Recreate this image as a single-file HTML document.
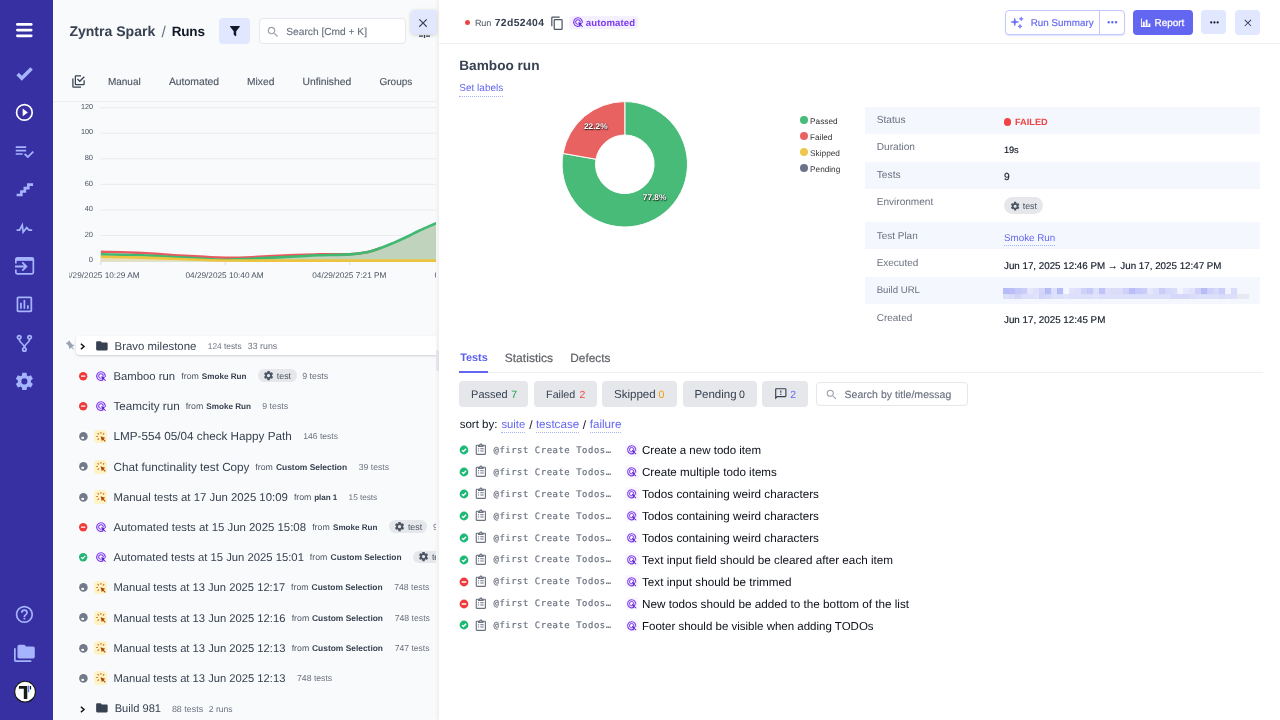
<!DOCTYPE html>
<html lang="en">
<head>
<meta charset="utf-8">
<title>Zyntra Spark / Runs</title>
<style>
*{box-sizing:border-box;margin:0;padding:0}
html,body{width:1280px;height:720px;overflow:hidden;background:#fff}
body{text-rendering:geometricPrecision;font-family:"Liberation Sans",sans-serif;color:#374151;position:relative;font-size:11.2px}
.abs,.t{position:absolute}
.t{white-space:pre;line-height:20px;height:20px;}
svg{position:absolute;display:block;overflow:visible}
#side{position:absolute;left:0;top:0;width:52.5px;height:720px;background:#3730a3}
#side svg{fill:#a5b4fc}
#side svg.w{fill:#fff}
#left{position:absolute;left:52.5px;top:0;width:386.7px;height:720px;background:#f9fafb;overflow:hidden}
#right{position:absolute;left:439.2px;top:0;width:840.8px;height:720px;background:#fff;box-shadow:-1px 0 4px rgba(0,0,0,.07)}
#app{position:absolute;left:0;top:0;width:1280px;height:720px;overflow:hidden;will-change:transform;background:#fff}

</style>
</head>
<body>
<div id="app">
<nav id="side">
<svg class="w" style="left:16.2px;top:22.6px" width="16.6" height="14.2" viewBox="0 0 16.6 14.2"><rect x="0" y="0" width="16.6" height="2.8" rx="1.4"/><rect x="0" y="5.7" width="16.6" height="2.8" rx="1.4"/><rect x="0" y="11.4" width="16.6" height="2.8" rx="1.4"/></svg>
<svg style="left:14.0px;top:62.6px" width="20.8" height="20.8" viewBox="0 0 24 24"><path d="M9,20.42L2.79,14.21L5.62,11.38L9,14.77L18.88,4.88L21.71,7.71L9,20.42Z"/></svg>
<svg class="w" style="left:14.0px;top:101.6px" width="20.8" height="20.8" viewBox="0 0 24 24"><path d="M12,20C7.59,20 4,16.41 4,12C4,7.59 7.59,4 12,4C16.41,4 20,7.59 20,12C20,16.41 16.41,20 12,20M12,2A10,10 0 0,0 2,12A10,10 0 0,0 12,22A10,10 0 0,0 22,12A10,10 0 0,0 12,2M10,16.5L16,12L10,7.5V16.5Z"/></svg>
<svg style="left:14.0px;top:140.6px" width="20.8" height="20.8" viewBox="0 0 24 24"><path d="M14,10H2V12H14V10M14,6H2V8H14V6M2,16H10V14H2V16M21.5,11.5L23,13L16,20L11.5,15.5L13,14L16,17L21.5,11.5Z"/></svg>
<svg style="left:14.0px;top:178.6px" width="20.8" height="20.8" viewBox="0 0 24 24"><path d="M15,5V9H11V13H7V17H3V20H10V16H14V12H18V8H22V5H15Z"/></svg>
<svg style="left:14.0px;top:217.6px" width="20.8" height="20.8" viewBox="0 0 24 24"><path d="M3,13H5.79L10.1,4.79L11.28,13.75L14.5,9.66L17.83,13H21V15H17L14.67,12.67L9.92,18.73L8.94,11.31L7,15H3V13Z"/></svg>
<svg style="left:14.6px;top:257.3px" width="19.2" height="17.7" viewBox="0 0 19.2 17.7"><path d="M0.85 6.6V2.4a1.5 1.5 0 0 1 1.5-1.5H16.85a1.5 1.5 0 0 1 1.5 1.5V15.3a1.5 1.5 0 0 1-1.5 1.5H2.35a1.5 1.5 0 0 1-1.5-1.5V12.4" fill="none" stroke="#a5b4fc" stroke-width="1.7"/><rect x="0.85" y="0.85" width="17.5" height="3" /><path d="M0 9.5H10.8M7.3 5.4L11.4 9.5L7.3 13.6" fill="none" stroke="#a5b4fc" stroke-width="1.8"/></svg>
<svg style="left:14.0px;top:293.6px" width="20.8" height="20.8" viewBox="0 0 24 24"><path d="M9 17H7V10H9V17M13 17H11V7H13V17M17 17H15V13H17V17M19 19H5V5H19V19.1M19 3H5C3.9 3 3 3.9 3 5V19C3 20.1 3.9 21 5 21H19C20.1 21 21 20.1 21 19V5C21 3.9 20.1 3 19 3Z"/></svg>
<svg style="left:14.0px;top:332.6px" width="20.8" height="20.8" viewBox="0 0 24 24"><path d="M6,2A3,3 0 0,1 9,5C9,6.28 8.19,7.38 7.06,7.81C7.15,8.27 7.39,8.83 8,9.63C9,10.92 11,12.83 12,14.17C13,12.83 15,10.92 16,9.63C16.61,8.83 16.85,8.27 16.94,7.81C15.81,7.38 15,6.28 15,5A3,3 0 0,1 18,2A3,3 0 0,1 21,5C21,6.32 20.14,7.45 18.95,7.85C18.87,8.37 18.64,9 18,9.83C17,11.17 15,13.08 14,14.38C13.39,15.17 13.15,15.73 13.06,16.19C14.19,16.62 15,17.72 15,19A3,3 0 0,1 12,22A3,3 0 0,1 9,19C9,17.72 9.81,16.62 10.94,16.19C10.85,15.73 10.61,15.17 10,14.38C9,13.08 7,11.17 6,9.83C5.36,9 5.13,8.37 5.05,7.85C3.86,7.45 3,6.32 3,5A3,3 0 0,1 6,2M6,4A1,1 0 0,0 5,5A1,1 0 0,0 6,6A1,1 0 0,0 7,5A1,1 0 0,0 6,4M18,4A1,1 0 0,0 17,5A1,1 0 0,0 18,6A1,1 0 0,0 19,5A1,1 0 0,0 18,4M12,18A1,1 0 0,0 11,19A1,1 0 0,0 12,20A1,1 0 0,0 13,19A1,1 0 0,0 12,18Z"/></svg>
<svg style="left:14.0px;top:370.6px" width="20.8" height="20.8" viewBox="0 0 24 24"><path d="M12,15.5A3.5,3.5 0 0,1 8.5,12A3.5,3.5 0 0,1 12,8.5A3.5,3.5 0 0,1 15.5,12A3.5,3.5 0 0,1 12,15.5M19.43,12.97C19.47,12.65 19.5,12.33 19.5,12C19.5,11.67 19.47,11.34 19.43,11L21.54,9.37C21.73,9.22 21.78,8.95 21.66,8.73L19.66,5.27C19.54,5.05 19.27,4.96 19.05,5.05L16.56,6.05C16.04,5.66 15.5,5.32 14.87,5.07L14.5,2.42C14.46,2.18 14.25,2 14,2H10C9.75,2 9.54,2.18 9.5,2.42L9.13,5.07C8.5,5.32 7.96,5.66 7.44,6.05L4.95,5.05C4.73,4.96 4.46,5.05 4.34,5.27L2.34,8.73C2.21,8.95 2.27,9.22 2.46,9.37L4.57,11C4.53,11.34 4.5,11.67 4.5,12C4.5,12.33 4.53,12.65 4.57,12.97L2.46,14.63C2.27,14.78 2.21,15.05 2.34,15.27L4.34,18.73C4.46,18.95 4.73,19.03 4.95,18.95L7.44,17.94C7.96,18.34 8.5,18.68 9.13,18.93L9.5,21.58C9.54,21.82 9.75,22 10,22H14C14.25,22 14.46,21.82 14.5,21.58L14.87,18.93C15.5,18.67 16.04,18.34 16.56,17.94L19.05,18.95C19.27,19.03 19.54,18.95 19.66,18.73L21.66,15.27C21.78,15.05 21.73,14.78 21.54,14.63L19.43,12.97Z"/></svg>
<svg style="left:14.0px;top:603.6px" width="20.8" height="20.8" viewBox="0 0 24 24"><path d="M11,18H13V16H11V18M12,2A10,10 0 0,0 2,12A10,10 0 0,0 12,22A10,10 0 0,0 22,12A10,10 0 0,0 12,2M12,20C7.59,20 4,16.41 4,12C4,7.59 7.59,4 12,4C16.41,4 20,7.59 20,12C20,16.41 16.41,20 12,20M12,6A4,4 0 0,0 8,10H10A2,2 0 0,1 12,8A2,2 0 0,1 14,10C14,12 11,11.75 11,15H13C13,12.75 16,12.5 16,10A4,4 0 0,0 12,6Z"/></svg>
<svg style="left:14.0px;top:642.6px" width="20.8" height="20.8" viewBox="0 0 24 24"><path d="M22,4H14L12,2H6A2,2 0 0,0 4,4V16A2,2 0 0,0 6,18H22A2,2 0 0,0 24,16V6A2,2 0 0,0 22,4M2,6H0V11H0V20A2,2 0 0,0 2,22H20V20H2V6Z"/></svg>
<svg style="left:0;top:0" width="52" height="720" viewBox="0 0 52 720"><circle cx="25.05" cy="691.65" r="10.4" fill="#fff" stroke="#1a1a1a" stroke-width="1.1"/><path d="M18.9 686H27.3V698.9H23.8V688.8H18.9Z" fill="#1a1a1a"/><rect x="27.9" y="685.6" width="1.3" height="6.6" fill="#4f7df5"/><rect x="29.9" y="686" width="1.2" height="3.5" fill="#1a1a1a"/></svg>
</nav>
<section id="left">
<span class="t" style="left:16.9px;top:21px;font-size:14.06px;font-weight:700;color:#374151">Zyntra Spark</span>
<span class="t" style="left:108.9px;top:23px;font-size:15.41px;letter-spacing:0.520px;color:#6b7280">/</span>
<span class="t" style="left:119.2px;top:22px;font-size:13.54px;letter-spacing:-0.175px;font-weight:700;color:#111827">Runs</span>
<div class="abs" style="left:166.5px;top:18.1px;width:30.8px;height:25.9px;background:#e0e7ff;border-radius:4px"></div>
<svg style="left:177.0px;top:26.4px" width="9.9" height="10.2" viewBox="0 0 9.9 10.2" fill="#111827"><path d="M0.5 0H9.4a.5.5 0 0 1 .4.8L6.2 5.2V9.7a.5.5 0 0 1-.8.4L4 9a.8.8 0 0 1-.3-.6V5.2L.1.8A.5.5 0 0 1 .5 0Z"/></svg>
<div class="abs" style="left:206.0px;top:18px;width:147.1px;height:26px;background:#fff;border:1px solid #e5e7eb;border-radius:4px"></div>
<svg style="left:213.8px;top:24.7px" width="14.0" height="14.0" viewBox="0 0 24 24" fill="#9ca3af"><path d="M9.5,3A6.5,6.5 0 0,1 16,9.5C16,11.11 15.41,12.59 14.44,13.73L14.71,14H15.5L20.5,19L19,20.5L14,15.5V14.71L13.73,14.44C12.59,15.41 11.11,16 9.5,16A6.5,6.5 0 0,1 3,9.5A6.5,6.5 0 0,1 9.5,3M9.5,5C7,5 5,7 5,9.5C5,12 7,14 9.5,14C12,14 14,12 14,9.5C14,7 12,5 9.5,5Z"/></svg>
<span class="t" style="left:233.8px;top:23px;font-size:10.20px;color:#6b7280;-webkit-text-stroke:.15px #6b7280">Search [Cmd + K]</span>
<svg style="left:365.0px;top:27px" width="13" height="12" viewBox="0 0 13 12" fill="none" stroke="#374151" stroke-width="1.3"><path d="M1 5H12M1 9.2H5M8 9.2H12M6.5 8V11"/></svg>
<svg style="left:18.5px;top:74.3px" width="15.0" height="15.0" viewBox="0 0 24 24" fill="#374151"><path d="M20,16V10H22V16A2,2 0 0,1 20,18H8C6.89,18 6,17.1 6,16V4C6,2.89 6.89,2 8,2H16V4H8V16H20M10.91,7.08L14,10.17L20.59,3.58L22,5L14,13L9.5,8.5L10.91,7.08M16,20V22H4A2,2 0 0,1 2,20V7H4V20H16Z"/></svg>
<span class="t" style="left:55.4px;top:73px;font-size:10.02px;color:#4b5563;-webkit-text-stroke:.12px #4b5563">Manual</span>
<span class="t" style="left:116.4px;top:73px;font-size:10.40px;color:#4b5563;-webkit-text-stroke:.12px #4b5563">Automated</span>
<span class="t" style="left:194.5px;top:73px;font-size:10.27px;color:#4b5563;-webkit-text-stroke:.12px #4b5563">Mixed</span>
<span class="t" style="left:250.0px;top:73px;font-size:10.32px;color:#4b5563;-webkit-text-stroke:.12px #4b5563">Unfinished</span>
<span class="t" style="left:327.0px;top:73px;font-size:10.00px;color:#4b5563;-webkit-text-stroke:.12px #4b5563">Groups</span>
<div class="abs" style="left:0;top:100.8px;width:383.5px;height:1px;background:#eceef1"></div>
<svg style="left:0;top:0;overflow:hidden" width="383.5" height="300" viewBox="52.5 0 383.5 300"><path d="M100 107.70H436" stroke="#e9ebee" stroke-width="1" fill="none"/><path d="M100 133.25H436" stroke="#e9ebee" stroke-width="1" fill="none"/><path d="M100 158.80H436" stroke="#e9ebee" stroke-width="1" fill="none"/><path d="M100 184.35H436" stroke="#e9ebee" stroke-width="1" fill="none"/><path d="M100 209.90H436" stroke="#e9ebee" stroke-width="1" fill="none"/><path d="M100 235.45H436" stroke="#e9ebee" stroke-width="1" fill="none"/><path d="M100 261.00H436" stroke="#e9ebee" stroke-width="1" fill="none"/><path d="M100.3 261V265" stroke="#d8dbe0" stroke-width="1" fill="none"/><path d="M224.8 261V265" stroke="#d8dbe0" stroke-width="1" fill="none"/><path d="M349.3 261V265" stroke="#d8dbe0" stroke-width="1" fill="none"/><path d="M100.3 254.40C107.2 254.55 129.8 254.87 141.9 255.30C154.0 255.73 162.7 256.42 173.1 257.00C183.5 257.58 195.8 258.33 204.4 258.80C213.0 259.27 217.0 259.82 224.8 259.80C232.6 259.78 239.6 259.25 251.2 258.70C262.9 258.15 284.0 257.07 295.0 256.50C306.0 255.93 308.4 255.65 317.5 255.30C326.6 254.95 341.0 254.97 349.3 254.40C357.6 253.83 362.4 252.95 367.5 251.90C372.6 250.85 375.8 249.57 380.0 248.10C384.2 246.63 388.3 244.87 392.5 243.10C396.7 241.33 400.8 239.47 405.0 237.50C409.2 235.53 413.3 233.23 417.5 231.25C421.7 229.27 426.9 226.96 430.0 225.60C433.1 224.24 433.3 224.28 436.0 223.10C438.7 221.92 444.3 219.27 446.0 218.50V261.4H100.3Z" fill="#c0d3bd"/><path d="M100.3 256.80C107.2 256.93 129.8 257.27 141.9 257.60C154.0 257.93 162.7 258.40 173.1 258.80C183.5 259.20 195.8 259.72 204.4 260.00C213.0 260.28 217.0 260.40 224.8 260.50C232.6 260.60 232.1 260.58 251.2 260.60C270.4 260.62 309.2 260.60 340.0 260.60C370.8 260.60 418.3 260.60 436.0 260.60C453.7 260.60 444.3 260.60 446.0 260.60V261.6H100.3Z" fill="#e6dfbd"/><path d="M100.3 251.70C107.2 251.92 129.8 252.42 141.9 253.00C154.0 253.58 162.7 254.55 173.1 255.20C183.5 255.85 195.8 256.48 204.4 256.90C213.0 257.32 217.0 257.65 224.8 257.70C232.6 257.75 239.6 257.65 251.2 257.20C262.9 256.75 284.0 255.47 295.0 255.00C306.0 254.53 308.4 254.53 317.5 254.40C326.6 254.27 341.0 254.62 349.3 254.20C357.6 253.78 362.4 252.92 367.5 251.90C372.6 250.88 377.9 248.73 380.0 248.10" fill="none" stroke="#e85a5f" stroke-width="2.6" stroke-linejoin="round"/><path d="M100.3 254.40C107.2 254.55 129.8 254.87 141.9 255.30C154.0 255.73 162.7 256.42 173.1 257.00C183.5 257.58 195.8 258.33 204.4 258.80C213.0 259.27 217.0 259.82 224.8 259.80C232.6 259.78 239.6 259.25 251.2 258.70C262.9 258.15 284.0 257.07 295.0 256.50C306.0 255.93 308.4 255.65 317.5 255.30C326.6 254.95 341.0 254.97 349.3 254.40C357.6 253.83 362.4 252.95 367.5 251.90C372.6 250.85 375.8 249.57 380.0 248.10C384.2 246.63 388.3 244.87 392.5 243.10C396.7 241.33 400.8 239.47 405.0 237.50C409.2 235.53 413.3 233.23 417.5 231.25C421.7 229.27 426.9 226.96 430.0 225.60C433.1 224.24 433.3 224.28 436.0 223.10C438.7 221.92 444.3 219.27 446.0 218.50" fill="none" stroke="#3fb871" stroke-width="2.6" stroke-linejoin="round"/><path d="M100.3 256.80C107.2 256.93 129.8 257.27 141.9 257.60C154.0 257.93 162.7 258.40 173.1 258.80C183.5 259.20 195.8 259.72 204.4 260.00C213.0 260.28 217.0 260.40 224.8 260.50C232.6 260.60 232.1 260.58 251.2 260.60C270.4 260.62 309.2 260.60 340.0 260.60C370.8 260.60 418.3 260.60 436.0 260.60C453.7 260.60 444.3 260.60 446.0 260.60" fill="none" stroke="#ecc440" stroke-width="2.6" stroke-linejoin="round"/></svg>
<span class="t" style="left:28.4px;top:97px;font-size:7.26px;color:#4b5563">120</span>
<span class="t" style="left:28.4px;top:122px;font-size:7.26px;color:#4b5563">100</span>
<span class="t" style="left:32.2px;top:148px;font-size:7.46px;color:#4b5563">80</span>
<span class="t" style="left:32.2px;top:174px;font-size:7.46px;color:#4b5563">60</span>
<span class="t" style="left:32.2px;top:199px;font-size:7.46px;color:#4b5563">40</span>
<span class="t" style="left:32.2px;top:225px;font-size:7.46px;color:#4b5563">20</span>
<span class="t" style="left:36.3px;top:250px;font-size:7.54px;color:#4b5563">0</span>
<div class="abs" style="left:16.8px;top:262px;width:366.7px;height:26px;overflow:hidden">
<span class="t" style="left:-8.2px;top:4px;font-size:8.25px;color:#4b5563">04/29/2025 10:29 AM</span>
<span class="t" style="left:116.2px;top:4px;font-size:8.23px;color:#4b5563">04/29/2025 10:40 AM</span>
<span class="t" style="left:243.0px;top:4px;font-size:8.22px;color:#4b5563">04/29/2025 7:21 PM</span>
<span class="t" style="left:365.2px;top:3px;font-size:8.72px;color:#4b5563">04/30/2025 9:02 AM</span>
</div>
<svg style="left:25.5px;top:370.9px" width="10.4" height="10.4" viewBox="0 0 10.4 10.4"><circle cx="5.2" cy="5.2" r="5.2" fill="#fff"/><circle cx="5.2" cy="5.2" r="4.2" fill="#ef3b3b"/><rect x="3" y="4.55" width="4.4" height="1.3" rx=".3" fill="#fff"/></svg>
<div class="abs" style="left:41.4px;top:369.3px;width:13.6px;height:13.6px;background:#faf7ff;border-radius:3px"></div>
<svg style="left:42.2px;top:370.1px" width="12.0" height="12.0" viewBox="-6 -6 12 12" fill="none"><path d="M2.6 3.5A4.3 4.3 0 1 1 4.2 1" stroke="#7c3aed" stroke-width="1.15"/><path d="M.6 2.2A2.3 2.3 0 1 1 2.2 .5" stroke="#7c3aed" stroke-width="1.05"/><path d="M.2 .1L4.1 1.5L2.9 2.3L4.9 4.4L4.3 5L2.2 2.9L1.5 4.1Z" fill="#5b21d6"/></svg>
<span class="t" style="left:61.0px;top:367px;font-size:11.30px;color:#374151">Bamboo run</span>
<span class="t" style="left:128.8px;top:366px;font-size:8.75px;color:#4b5563">from</span>
<span class="t" style="left:149.3px;top:367px;font-size:8.15px;font-weight:700;color:#374151">Smoke Run</span>
<div class="abs" style="left:205.0px;top:369.4px;width:39.1px;height:12.8px;background:#e5e7eb;border-radius:6.4px"></div>
<svg style="left:210.6px;top:370.2px" width="11.1" height="11.1" viewBox="0 0 24 24" fill="#4b5563"><path d="M12,15.5A3.5,3.5 0 0,1 8.5,12A3.5,3.5 0 0,1 12,8.5A3.5,3.5 0 0,1 15.5,12A3.5,3.5 0 0,1 12,15.5M19.43,12.97C19.47,12.65 19.5,12.33 19.5,12C19.5,11.67 19.47,11.34 19.43,11L21.54,9.37C21.73,9.22 21.78,8.95 21.66,8.73L19.66,5.27C19.54,5.05 19.27,4.96 19.05,5.05L16.56,6.05C16.04,5.66 15.5,5.32 14.87,5.07L14.5,2.42C14.46,2.18 14.25,2 14,2H10C9.75,2 9.54,2.18 9.5,2.42L9.13,5.07C8.5,5.32 7.96,5.66 7.44,6.05L4.95,5.05C4.73,4.96 4.46,5.05 4.34,5.27L2.34,8.73C2.21,8.95 2.27,9.22 2.46,9.37L4.57,11C4.53,11.34 4.5,11.67 4.5,12C4.5,12.33 4.53,12.65 4.57,12.97L2.46,14.63C2.27,14.78 2.21,15.05 2.34,15.27L4.34,18.73C4.46,18.95 4.73,19.03 4.95,18.95L7.44,17.94C7.96,18.34 8.5,18.68 9.13,18.93L9.5,21.58C9.54,21.82 9.75,22 10,22H14C14.25,22 14.46,21.82 14.5,21.58L14.87,18.93C15.5,18.67 16.04,18.34 16.56,17.94L19.05,18.95C19.27,19.03 19.54,18.95 19.66,18.73L21.66,15.27C21.78,15.05 21.73,14.78 21.54,14.63L19.43,12.97Z"/></svg>
<span class="t" style="left:224.2px;top:366px;font-size:8.93px;color:#4b5563">test</span>
<span class="t" style="left:249.7px;top:366px;font-size:8.86px;color:#6b7280">9 tests</span>
<svg style="left:25.5px;top:401.1px" width="10.4" height="10.4" viewBox="0 0 10.4 10.4"><circle cx="5.2" cy="5.2" r="5.2" fill="#fff"/><circle cx="5.2" cy="5.2" r="4.2" fill="#ef3b3b"/><rect x="3" y="4.55" width="4.4" height="1.3" rx=".3" fill="#fff"/></svg>
<div class="abs" style="left:41.4px;top:399.5px;width:13.6px;height:13.6px;background:#faf7ff;border-radius:3px"></div>
<svg style="left:42.2px;top:400.3px" width="12.0" height="12.0" viewBox="-6 -6 12 12" fill="none"><path d="M2.6 3.5A4.3 4.3 0 1 1 4.2 1" stroke="#7c3aed" stroke-width="1.15"/><path d="M.6 2.2A2.3 2.3 0 1 1 2.2 .5" stroke="#7c3aed" stroke-width="1.05"/><path d="M.2 .1L4.1 1.5L2.9 2.3L4.9 4.4L4.3 5L2.2 2.9L1.5 4.1Z" fill="#5b21d6"/></svg>
<span class="t" style="left:61.0px;top:397px;font-size:11.70px;color:#374151">Teamcity run</span>
<span class="t" style="left:133.2px;top:396px;font-size:8.75px;color:#4b5563">from</span>
<span class="t" style="left:153.8px;top:397px;font-size:8.13px;font-weight:700;color:#374151">Smoke Run</span>
<span class="t" style="left:209.8px;top:396px;font-size:8.76px;color:#6b7280">9 tests</span>
<svg style="left:25.3px;top:431.1px" width="10.8" height="10.8" viewBox="0 0 10.8 10.8"><circle cx="5.4" cy="5.4" r="5.4" fill="#fff"/><circle cx="5.4" cy="5.4" r="4.3" fill="#737a89"/><ellipse cx="4.7" cy="6.9" rx="1.5" ry="1.15" fill="#fff"/></svg>
<div class="abs" style="left:41.4px;top:429.6px;width:13.6px;height:13.8px;background:#fef3c7;border-radius:3.5px"></div>
<svg style="left:41.4px;top:429.6px" width="13.7" height="13.8" viewBox="0 0 13.7 13.8"><path d="M6.9 1.9V3.7M3.6 3.2L4.9 4.5M10.2 3.2L8.9 4.5M2.2 6.5H4M3.6 9.8L4.9 8.5" stroke="#d07a2a" stroke-width="1.15" fill="none"/><path d="M6.6 6.3L11.2 7.8L9.7 8.9L11.7 10.9L10.9 11.7L8.9 9.7L7.8 11.2Z" fill="#b04a06"/></svg>
<span class="t" style="left:61.0px;top:427px;font-size:11.71px;color:#374151">LMP-554 05/04 check Happy Path</span>
<span class="t" style="left:250.8px;top:426px;font-size:8.55px;color:#6b7280">146 tests</span>
<svg style="left:25.3px;top:461.3px" width="10.8" height="10.8" viewBox="0 0 10.8 10.8"><circle cx="5.4" cy="5.4" r="5.4" fill="#fff"/><circle cx="5.4" cy="5.4" r="4.3" fill="#737a89"/><ellipse cx="4.7" cy="6.9" rx="1.5" ry="1.15" fill="#fff"/></svg>
<div class="abs" style="left:41.4px;top:459.8px;width:13.6px;height:13.8px;background:#fef3c7;border-radius:3.5px"></div>
<svg style="left:41.4px;top:459.8px" width="13.7" height="13.8" viewBox="0 0 13.7 13.8"><path d="M6.9 1.9V3.7M3.6 3.2L4.9 4.5M10.2 3.2L8.9 4.5M2.2 6.5H4M3.6 9.8L4.9 8.5" stroke="#d07a2a" stroke-width="1.15" fill="none"/><path d="M6.6 6.3L11.2 7.8L9.7 8.9L11.7 10.9L10.9 11.7L8.9 9.7L7.8 11.2Z" fill="#b04a06"/></svg>
<span class="t" style="left:61.0px;top:458px;font-size:11.71px;color:#374151">Chat functinality test Copy</span>
<span class="t" style="left:202.8px;top:457px;font-size:8.75px;color:#4b5563">from</span>
<span class="t" style="left:223.4px;top:457px;font-size:8.45px;font-weight:700;color:#374151">Custom Selection</span>
<span class="t" style="left:306.2px;top:457px;font-size:8.70px;color:#6b7280">39 tests</span>
<svg style="left:25.3px;top:491.5px" width="10.8" height="10.8" viewBox="0 0 10.8 10.8"><circle cx="5.4" cy="5.4" r="5.4" fill="#fff"/><circle cx="5.4" cy="5.4" r="4.3" fill="#737a89"/><ellipse cx="4.7" cy="6.9" rx="1.5" ry="1.15" fill="#fff"/></svg>
<div class="abs" style="left:41.4px;top:490.0px;width:13.6px;height:13.8px;background:#fef3c7;border-radius:3.5px"></div>
<svg style="left:41.4px;top:490.0px" width="13.7" height="13.8" viewBox="0 0 13.7 13.8"><path d="M6.9 1.9V3.7M3.6 3.2L4.9 4.5M10.2 3.2L8.9 4.5M2.2 6.5H4M3.6 9.8L4.9 8.5" stroke="#d07a2a" stroke-width="1.15" fill="none"/><path d="M6.6 6.3L11.2 7.8L9.7 8.9L11.7 10.9L10.9 11.7L8.9 9.7L7.8 11.2Z" fill="#b04a06"/></svg>
<span class="t" style="left:61.0px;top:488px;font-size:11.36px;color:#374151">Manual tests at 17 Jun 2025 10:09</span>
<span class="t" style="left:241.4px;top:487px;font-size:8.75px;color:#4b5563">from</span>
<span class="t" style="left:261.7px;top:488px;font-size:8.08px;letter-spacing:-0.071px;font-weight:700;color:#374151">plan 1</span>
<span class="t" style="left:296.1px;top:488px;font-size:8.27px;letter-spacing:-0.052px;color:#6b7280">15 tests</span>
<svg style="left:25.5px;top:521.9px" width="10.4" height="10.4" viewBox="0 0 10.4 10.4"><circle cx="5.2" cy="5.2" r="5.2" fill="#fff"/><circle cx="5.2" cy="5.2" r="4.2" fill="#ef3b3b"/><rect x="3" y="4.55" width="4.4" height="1.3" rx=".3" fill="#fff"/></svg>
<div class="abs" style="left:41.4px;top:520.3px;width:13.6px;height:13.6px;background:#faf7ff;border-radius:3px"></div>
<svg style="left:42.2px;top:521.1px" width="12.0" height="12.0" viewBox="-6 -6 12 12" fill="none"><path d="M2.6 3.5A4.3 4.3 0 1 1 4.2 1" stroke="#7c3aed" stroke-width="1.15"/><path d="M.6 2.2A2.3 2.3 0 1 1 2.2 .5" stroke="#7c3aed" stroke-width="1.05"/><path d="M.2 .1L4.1 1.5L2.9 2.3L4.9 4.4L4.3 5L2.2 2.9L1.5 4.1Z" fill="#5b21d6"/></svg>
<span class="t" style="left:61.0px;top:518px;font-size:11.40px;color:#374151">Automated tests at 15 Jun 2025 15:08</span>
<span class="t" style="left:259.7px;top:517px;font-size:8.75px;color:#4b5563">from</span>
<span class="t" style="left:280.5px;top:518px;font-size:8.09px;font-weight:700;color:#374151">Smoke Run</span>
<div class="abs" style="left:336.2px;top:520.4px;width:38.4px;height:12.8px;background:#e5e7eb;border-radius:6.4px"></div>
<svg style="left:341.9px;top:521.2px" width="11.1" height="11.1" viewBox="0 0 24 24" fill="#4b5563"><path d="M12,15.5A3.5,3.5 0 0,1 8.5,12A3.5,3.5 0 0,1 12,8.5A3.5,3.5 0 0,1 15.5,12A3.5,3.5 0 0,1 12,15.5M19.43,12.97C19.47,12.65 19.5,12.33 19.5,12C19.5,11.67 19.47,11.34 19.43,11L21.54,9.37C21.73,9.22 21.78,8.95 21.66,8.73L19.66,5.27C19.54,5.05 19.27,4.96 19.05,5.05L16.56,6.05C16.04,5.66 15.5,5.32 14.87,5.07L14.5,2.42C14.46,2.18 14.25,2 14,2H10C9.75,2 9.54,2.18 9.5,2.42L9.13,5.07C8.5,5.32 7.96,5.66 7.44,6.05L4.95,5.05C4.73,4.96 4.46,5.05 4.34,5.27L2.34,8.73C2.21,8.95 2.27,9.22 2.46,9.37L4.57,11C4.53,11.34 4.5,11.67 4.5,12C4.5,12.33 4.53,12.65 4.57,12.97L2.46,14.63C2.27,14.78 2.21,15.05 2.34,15.27L4.34,18.73C4.46,18.95 4.73,19.03 4.95,18.95L7.44,17.94C7.96,18.34 8.5,18.68 9.13,18.93L9.5,21.58C9.54,21.82 9.75,22 10,22H14C14.25,22 14.46,21.82 14.5,21.58L14.87,18.93C15.5,18.67 16.04,18.34 16.56,17.94L19.05,18.95C19.27,19.03 19.54,18.95 19.66,18.73L21.66,15.27C21.78,15.05 21.73,14.78 21.54,14.63L19.43,12.97Z"/></svg>
<span class="t" style="left:355.4px;top:517px;font-size:8.93px;color:#4b5563">test</span>
<span class="t" style="left:380.5px;top:517px;font-size:8.86px;color:#6b7280">9 tests</span>
<svg style="left:25.5px;top:552.1px" width="10.4" height="10.4" viewBox="0 0 10.4 10.4"><circle cx="5.2" cy="5.2" r="5.2" fill="#fff"/><circle cx="5.2" cy="5.2" r="4.2" fill="#22b573"/><path d="M3.2 5.3L4.6 6.7L7.3 3.9" fill="none" stroke="#fff" stroke-width="1.2"/></svg>
<div class="abs" style="left:41.4px;top:550.5px;width:13.6px;height:13.6px;background:#faf7ff;border-radius:3px"></div>
<svg style="left:42.2px;top:551.3px" width="12.0" height="12.0" viewBox="-6 -6 12 12" fill="none"><path d="M2.6 3.5A4.3 4.3 0 1 1 4.2 1" stroke="#7c3aed" stroke-width="1.15"/><path d="M.6 2.2A2.3 2.3 0 1 1 2.2 .5" stroke="#7c3aed" stroke-width="1.05"/><path d="M.2 .1L4.1 1.5L2.9 2.3L4.9 4.4L4.3 5L2.2 2.9L1.5 4.1Z" fill="#5b21d6"/></svg>
<span class="t" style="left:61.0px;top:548px;font-size:11.28px;color:#374151">Automated tests at 15 Jun 2025 15:01</span>
<span class="t" style="left:257.3px;top:547px;font-size:8.75px;color:#4b5563">from</span>
<span class="t" style="left:278.1px;top:547px;font-size:8.42px;font-weight:700;color:#374151">Custom Selection</span>
<div class="abs" style="left:360.2px;top:550.6px;width:39.1px;height:12.8px;background:#e5e7eb;border-radius:6.4px"></div>
<svg style="left:365.8px;top:551.4px" width="11.1" height="11.1" viewBox="0 0 24 24" fill="#4b5563"><path d="M12,15.5A3.5,3.5 0 0,1 8.5,12A3.5,3.5 0 0,1 12,8.5A3.5,3.5 0 0,1 15.5,12A3.5,3.5 0 0,1 12,15.5M19.43,12.97C19.47,12.65 19.5,12.33 19.5,12C19.5,11.67 19.47,11.34 19.43,11L21.54,9.37C21.73,9.22 21.78,8.95 21.66,8.73L19.66,5.27C19.54,5.05 19.27,4.96 19.05,5.05L16.56,6.05C16.04,5.66 15.5,5.32 14.87,5.07L14.5,2.42C14.46,2.18 14.25,2 14,2H10C9.75,2 9.54,2.18 9.5,2.42L9.13,5.07C8.5,5.32 7.96,5.66 7.44,6.05L4.95,5.05C4.73,4.96 4.46,5.05 4.34,5.27L2.34,8.73C2.21,8.95 2.27,9.22 2.46,9.37L4.57,11C4.53,11.34 4.5,11.67 4.5,12C4.5,12.33 4.53,12.65 4.57,12.97L2.46,14.63C2.27,14.78 2.21,15.05 2.34,15.27L4.34,18.73C4.46,18.95 4.73,19.03 4.95,18.95L7.44,17.94C7.96,18.34 8.5,18.68 9.13,18.93L9.5,21.58C9.54,21.82 9.75,22 10,22H14C14.25,22 14.46,21.82 14.5,21.58L14.87,18.93C15.5,18.67 16.04,18.34 16.56,17.94L19.05,18.95C19.27,19.03 19.54,18.95 19.66,18.73L21.66,15.27C21.78,15.05 21.73,14.78 21.54,14.63L19.43,12.97Z"/></svg>
<span class="t" style="left:379.4px;top:547px;font-size:8.93px;color:#4b5563">test</span>
<svg style="left:25.3px;top:582.1px" width="10.8" height="10.8" viewBox="0 0 10.8 10.8"><circle cx="5.4" cy="5.4" r="5.4" fill="#fff"/><circle cx="5.4" cy="5.4" r="4.3" fill="#737a89"/><ellipse cx="4.7" cy="6.9" rx="1.5" ry="1.15" fill="#fff"/></svg>
<div class="abs" style="left:41.4px;top:580.6px;width:13.6px;height:13.8px;background:#fef3c7;border-radius:3.5px"></div>
<svg style="left:41.4px;top:580.6px" width="13.7" height="13.8" viewBox="0 0 13.7 13.8"><path d="M6.9 1.9V3.7M3.6 3.2L4.9 4.5M10.2 3.2L8.9 4.5M2.2 6.5H4M3.6 9.8L4.9 8.5" stroke="#d07a2a" stroke-width="1.15" fill="none"/><path d="M6.6 6.3L11.2 7.8L9.7 8.9L11.7 10.9L10.9 11.7L8.9 9.7L7.8 11.2Z" fill="#b04a06"/></svg>
<span class="t" style="left:61.0px;top:578px;font-size:11.19px;color:#374151">Manual tests at 13 Jun 2025 12:17</span>
<span class="t" style="left:238.6px;top:577px;font-size:8.75px;color:#4b5563">from</span>
<span class="t" style="left:259.1px;top:577px;font-size:8.42px;font-weight:700;color:#374151">Custom Selection</span>
<span class="t" style="left:341.7px;top:577px;font-size:8.68px;color:#6b7280">748 tests</span>
<svg style="left:25.3px;top:612.3px" width="10.8" height="10.8" viewBox="0 0 10.8 10.8"><circle cx="5.4" cy="5.4" r="5.4" fill="#fff"/><circle cx="5.4" cy="5.4" r="4.3" fill="#737a89"/><ellipse cx="4.7" cy="6.9" rx="1.5" ry="1.15" fill="#fff"/></svg>
<div class="abs" style="left:41.4px;top:610.8px;width:13.6px;height:13.8px;background:#fef3c7;border-radius:3.5px"></div>
<svg style="left:41.4px;top:610.8px" width="13.7" height="13.8" viewBox="0 0 13.7 13.8"><path d="M6.9 1.9V3.7M3.6 3.2L4.9 4.5M10.2 3.2L8.9 4.5M2.2 6.5H4M3.6 9.8L4.9 8.5" stroke="#d07a2a" stroke-width="1.15" fill="none"/><path d="M6.6 6.3L11.2 7.8L9.7 8.9L11.7 10.9L10.9 11.7L8.9 9.7L7.8 11.2Z" fill="#b04a06"/></svg>
<span class="t" style="left:61.0px;top:609px;font-size:11.21px;color:#374151">Manual tests at 13 Jun 2025 12:16</span>
<span class="t" style="left:239.2px;top:608px;font-size:8.75px;color:#4b5563">from</span>
<span class="t" style="left:259.5px;top:608px;font-size:8.41px;font-weight:700;color:#374151">Custom Selection</span>
<span class="t" style="left:342.2px;top:608px;font-size:8.70px;color:#6b7280">748 tests</span>
<svg style="left:25.3px;top:642.5px" width="10.8" height="10.8" viewBox="0 0 10.8 10.8"><circle cx="5.4" cy="5.4" r="5.4" fill="#fff"/><circle cx="5.4" cy="5.4" r="4.3" fill="#737a89"/><ellipse cx="4.7" cy="6.9" rx="1.5" ry="1.15" fill="#fff"/></svg>
<div class="abs" style="left:41.4px;top:641.0px;width:13.6px;height:13.8px;background:#fef3c7;border-radius:3.5px"></div>
<svg style="left:41.4px;top:641.0px" width="13.7" height="13.8" viewBox="0 0 13.7 13.8"><path d="M6.9 1.9V3.7M3.6 3.2L4.9 4.5M10.2 3.2L8.9 4.5M2.2 6.5H4M3.6 9.8L4.9 8.5" stroke="#d07a2a" stroke-width="1.15" fill="none"/><path d="M6.6 6.3L11.2 7.8L9.7 8.9L11.7 10.9L10.9 11.7L8.9 9.7L7.8 11.2Z" fill="#b04a06"/></svg>
<span class="t" style="left:61.0px;top:639px;font-size:11.21px;color:#374151">Manual tests at 13 Jun 2025 12:13</span>
<span class="t" style="left:239.2px;top:638px;font-size:8.75px;color:#4b5563">from</span>
<span class="t" style="left:259.5px;top:638px;font-size:8.41px;font-weight:700;color:#374151">Custom Selection</span>
<span class="t" style="left:342.2px;top:638px;font-size:8.58px;color:#6b7280">747 tests</span>
<svg style="left:25.3px;top:672.7px" width="10.8" height="10.8" viewBox="0 0 10.8 10.8"><circle cx="5.4" cy="5.4" r="5.4" fill="#fff"/><circle cx="5.4" cy="5.4" r="4.3" fill="#737a89"/><ellipse cx="4.7" cy="6.9" rx="1.5" ry="1.15" fill="#fff"/></svg>
<div class="abs" style="left:41.4px;top:671.2px;width:13.6px;height:13.8px;background:#fef3c7;border-radius:3.5px"></div>
<svg style="left:41.4px;top:671.2px" width="13.7" height="13.8" viewBox="0 0 13.7 13.8"><path d="M6.9 1.9V3.7M3.6 3.2L4.9 4.5M10.2 3.2L8.9 4.5M2.2 6.5H4M3.6 9.8L4.9 8.5" stroke="#d07a2a" stroke-width="1.15" fill="none"/><path d="M6.6 6.3L11.2 7.8L9.7 8.9L11.7 10.9L10.9 11.7L8.9 9.7L7.8 11.2Z" fill="#b04a06"/></svg>
<span class="t" style="left:61.0px;top:669px;font-size:11.21px;color:#374151">Manual tests at 13 Jun 2025 12:13</span>
<span class="t" style="left:244.5px;top:668px;font-size:8.68px;color:#6b7280">748 tests</span>
<div class="abs" style="left:23.5px;top:336.3px;width:370px;height:18.8px;background:#fff;border-radius:4px;box-shadow:0 1px 3px rgba(0,0,0,.12),0 1px 2px rgba(0,0,0,.06)"></div>
<svg style="left:12.0px;top:339.8px;transform:rotate(-38deg)" width="11.4" height="11.4" viewBox="0 0 24 24" fill="#9aa3b5"><path d="M16,12V4H17V2H7V4H8V12L6,14V16H11.2V22H12.8V16H18V14L16,12Z"/></svg>
<svg style="left:27.7px;top:343.2px" width="5.2" height="7" viewBox="0 0 5.2 7"><path d="M.9 .7L4 3.5L.9 6.3" fill="none" stroke="#111" stroke-width="1.5"/></svg>
<svg style="left:42.3px;top:338.8px" width="13.8" height="13.8" viewBox="0 0 24 24" fill="#374151"><path d="M10,4H4C2.89,4 2,4.89 2,6V18A2,2 0 0,0 4,20H20A2,2 0 0,0 22,18V8C22,6.89 21.1,6 20,6H12L10,4Z"/></svg>
<span class="t" style="left:62.1px;top:337px;font-size:11.41px;color:#374151">Bravo milestone</span>
<span class="t" style="left:155.3px;top:336px;font-size:8.33px;color:#6b7280">124 tests</span>
<span class="t" style="left:195.3px;top:336px;font-size:8.82px;color:#6b7280">33 runs</span>
<svg style="left:27.7px;top:705.8px" width="5.2" height="7" viewBox="0 0 5.2 7"><path d="M.9 .7L4 3.5L.9 6.3" fill="none" stroke="#111" stroke-width="1.5"/></svg>
<svg style="left:42.3px;top:701.4px" width="13.8" height="13.8" viewBox="0 0 24 24" fill="#374151"><path d="M10,4H4C2.89,4 2,4.89 2,6V18A2,2 0 0,0 4,20H20A2,2 0 0,0 22,18V8C22,6.89 21.1,6 20,6H12L10,4Z"/></svg>
<span class="t" style="left:62.2px;top:699px;font-size:11.11px;color:#374151">Build 981</span>
<span class="t" style="left:119.4px;top:699px;font-size:8.91px;color:#6b7280">88 tests</span>
<span class="t" style="left:156.2px;top:699px;font-size:8.65px;color:#6b7280">2 runs</span>
<div class="abs" style="left:383.5px;top:0;width:3.2px;height:720px;background:#fafafa"></div>
<div class="abs" style="left:383.5px;top:349.7px;width:3.2px;height:21.7px;background:#e8eaf0;border-radius:1.6px"></div>
</section>
<main id="right">
<div class="abs" style="left:26.1px;top:20.2px;width:5px;height:5px;border-radius:50%;background:#ef4444"></div>
<span class="t" style="left:35.7px;top:13px;font-size:9.02px;letter-spacing:-0.126px;color:#4b5563">Run</span>
<span class="t" style="left:55.5px;top:14px;font-size:10.37px;letter-spacing:0.375px;font-weight:700;color:#374151">72d52404</span>
<svg style="left:110.5px;top:15.5px" width="14.5" height="14.5" viewBox="0 0 24 24" fill="#4b5563"><path d="M19,21H8V7H19M19,5H8A2,2 0 0,0 6,7V21A2,2 0 0,0 8,23H19A2,2 0 0,0 21,21V7A2,2 0 0,0 19,5M16,1H4A2,2 0 0,0 2,3V17H4V3H16V1Z"/></svg>
<div class="abs" style="left:130.1px;top:15.7px;width:68.4px;height:13.4px;background:#f5f0ff;border-radius:3px"></div>
<svg style="left:132.4px;top:16.4px" width="12.0" height="12.0" viewBox="-6 -6 12 12" fill="none"><path d="M2.6 3.5A4.3 4.3 0 1 1 4.2 1" stroke="#7c3aed" stroke-width="1.15"/><path d="M.6 2.2A2.3 2.3 0 1 1 2.2 .5" stroke="#7c3aed" stroke-width="1.05"/><path d="M.2 .1L4.1 1.5L2.9 2.3L4.9 4.4L4.3 5L2.2 2.9L1.5 4.1Z" fill="#5b21d6"/></svg>
<span class="t" style="left:146.6px;top:14px;font-size:9.60px;letter-spacing:0.104px;font-weight:700;color:#7c3aed">automated</span>
<div class="abs" style="left:0;top:43.2px;width:841.5px;height:1px;background:#eef0f2"></div>
<div class="abs" style="left:565.9px;top:9.8px;width:119.7px;height:25.4px;border:1px solid #c3c8fb;border-radius:4px;background:#fff;box-shadow:0 1px 1px rgba(99,102,241,.18)"></div>
<div class="abs" style="left:659.7px;top:9.8px;width:1px;height:25.4px;background:#c3c8fb"></div>
<svg style="left:0;top:0" width="700" height="40" viewBox="439.2 0 700 40"><path d="M1015.00 18.10L1015.77 21.23L1018.90 22.00L1015.77 22.77L1015.00 25.90L1014.23 22.77L1011.10 22.00L1014.23 21.23ZM1021.40 16.80L1021.82 18.48L1023.50 18.90L1021.82 19.32L1021.40 21.00L1020.98 19.32L1019.30 18.90L1020.98 18.48ZM1020.20 24.20L1020.62 25.88L1022.30 26.30L1020.62 26.72L1020.20 28.40L1019.78 26.72L1018.10 26.30L1019.78 25.88Z" fill="#6366f1" stroke="#6366f1" stroke-width=".5" stroke-linejoin="round"/></svg>
<span class="t" style="left:591.5px;top:14px;font-size:9.86px;color:#6366f1;-webkit-text-stroke:.15px #6366f1">Run Summary</span>
<svg style="left:665.6px;top:15.2px" width="14.7" height="14.7" viewBox="0 0 24 24" fill="#6366f1"><path d="M16,12A2,2 0 0,1 18,10A2,2 0 0,1 20,12A2,2 0 0,1 18,14A2,2 0 0,1 16,12M10,12A2,2 0 0,1 12,10A2,2 0 0,1 14,12A2,2 0 0,1 12,14A2,2 0 0,1 10,12M4,12A2,2 0 0,1 6,10A2,2 0 0,1 8,12A2,2 0 0,1 6,14A2,2 0 0,1 4,12Z"/></svg>
<div class="abs" style="left:693.8px;top:9.8px;width:60px;height:25.4px;border-radius:4px;background:#6366f1"></div>
<svg style="left:701.1px;top:16.9px" width="11.3" height="11.3" viewBox="0 0 24 24" fill="#fff"><path d="M22,21H2V3H4V19H6V10H10V19H12V6H16V19H18V14H22V21Z"/></svg>
<span class="t" style="left:715.4px;top:14px;font-size:9.94px;color:#fff;-webkit-text-stroke:.25px #fff">Report</span>
<div class="abs" style="left:762.0px;top:9.8px;width:25.3px;height:23.8px;border-radius:4px;background:#e0e7ff"></div>
<svg style="left:768.4px;top:15.9px" width="12.9" height="12.9" viewBox="0 0 24 24" fill="#111827"><path d="M16,12A2,2 0 0,1 18,10A2,2 0 0,1 20,12A2,2 0 0,1 18,14A2,2 0 0,1 16,12M10,12A2,2 0 0,1 12,10A2,2 0 0,1 14,12A2,2 0 0,1 12,14A2,2 0 0,1 10,12M4,12A2,2 0 0,1 6,10A2,2 0 0,1 8,12A2,2 0 0,1 6,14A2,2 0 0,1 4,12Z"/></svg>
<div class="abs" style="left:795.8px;top:9.8px;width:25.3px;height:25.4px;border-radius:4px;background:#e0e7ff"></div>
<svg style="left:802.8px;top:17.1px" width="11.8" height="11.8" viewBox="0 0 24 24" fill="#374151"><path d="M19,6.41L17.59,5L12,10.59L6.41,5L5,6.41L10.59,12L5,17.59L6.41,19L12,13.41L17.59,19L19,17.59L13.41,12L19,6.41Z"/></svg>
<span class="t" style="left:20.1px;top:56px;font-size:13.63px;font-weight:700;color:#374151">Bamboo run</span>
<span class="t" style="left:20.1px;top:79px;font-size:10.04px;color:#6366f1;border-bottom:1px dotted #a5b4fc;height:17.5px">Set labels</span>
<svg style="left:0;top:0" width="420" height="240" viewBox="0 0 420 240"><path d="M185.80 101.60A62.7 62.7 0 1 1 124.05 153.41L156.95 159.21A29.3 29.3 0 1 0 185.80 135.00Z" fill="#48bb78" stroke="#fff" stroke-width="1"/><path d="M124.05 153.41A62.7 62.7 0 0 1 185.80 101.60L185.80 135.00A29.3 29.3 0 0 0 156.95 159.21Z" fill="#e86262" stroke="#fff" stroke-width="1"/></svg>
<span class="t" style="left:144.8px;top:116px;font-size:8.32px;font-weight:700;color:#fff;text-shadow:.6px .8px 1.2px rgba(0,0,0,.75),0 0 1.5px rgba(0,0,0,.55)">22.2%</span>
<span class="t" style="left:203.6px;top:187px;font-size:8.32px;font-weight:700;color:#fff;text-shadow:.6px .8px 1.2px rgba(0,0,0,.75),0 0 1.5px rgba(0,0,0,.55)">77.8%</span>
<div class="abs" style="left:360.6px;top:116.1px;width:8.2px;height:8.2px;border-radius:50%;background:#48bb78"></div>
<span class="t" style="left:370.9px;top:112px;font-size:8.24px;color:#333">Passed</span>
<div class="abs" style="left:360.6px;top:132.2px;width:8.2px;height:8.2px;border-radius:50%;background:#e86262"></div>
<span class="t" style="left:370.9px;top:128px;font-size:8.19px;color:#333">Failed</span>
<div class="abs" style="left:360.6px;top:148.2px;width:8.2px;height:8.2px;border-radius:50%;background:#ecc94b"></div>
<span class="t" style="left:370.9px;top:144px;font-size:8.25px;color:#333">Skipped</span>
<div class="abs" style="left:360.6px;top:164.3px;width:8.2px;height:8.2px;border-radius:50%;background:#6b7289"></div>
<span class="t" style="left:370.9px;top:160px;font-size:8.23px;color:#333">Pending</span>
<div class="abs" style="left:425.8px;top:106.7px;width:395.2px;height:27.3px;background:#f5f7fe"></div>
<div class="abs" style="left:425.8px;top:161.7px;width:395.2px;height:27.3px;background:#f5f7fe"></div>
<div class="abs" style="left:425.8px;top:221.7px;width:395.2px;height:27.6px;background:#f5f7fe"></div>
<div class="abs" style="left:425.8px;top:276.7px;width:395.2px;height:27.3px;background:#f5f7fe"></div>
<span class="t" style="left:437.5px;top:111px;font-size:10.23px;color:#6b7280">Status</span>
<span class="t" style="left:437.5px;top:138px;font-size:10.14px;color:#6b7280">Duration</span>
<span class="t" style="left:437.5px;top:166px;font-size:10.28px;color:#6b7280">Tests</span>
<span class="t" style="left:437.5px;top:193px;font-size:10.09px;color:#6b7280">Environment</span>
<span class="t" style="left:437.5px;top:227px;font-size:9.97px;color:#6b7280">Test Plan</span>
<span class="t" style="left:437.5px;top:254px;font-size:9.98px;color:#6b7280">Executed</span>
<span class="t" style="left:437.5px;top:281px;font-size:9.62px;color:#6b7280">Build URL</span>
<span class="t" style="left:437.5px;top:309px;font-size:10.01px;color:#6b7280">Created</span>
<div class="abs" style="left:565.1px;top:118.4px;width:7.2px;height:7.2px;border-radius:50%;background:#ef4444"></div>
<span class="t" style="left:575.8px;top:112px;font-size:9.20px;font-weight:700;color:#ef4444">FAILED</span>
<span class="t" style="left:564.8px;top:140px;font-size:9.21px;letter-spacing:-0.075px;color:#111827;-webkit-text-stroke:.15px #111827">19s</span>
<span class="t" style="left:564.8px;top:168px;font-size:10.24px;color:#111827;-webkit-text-stroke:.15px #111827">9</span>
<div class="abs" style="left:564.8px;top:197.3px;width:38.7px;height:16.7px;background:#e5e7eb;border-radius:8.4px"></div>
<svg style="left:570.5px;top:200.6px" width="10.3" height="10.3" viewBox="0 0 24 24" fill="#4b5563"><path d="M12,15.5A3.5,3.5 0 0,1 8.5,12A3.5,3.5 0 0,1 12,8.5A3.5,3.5 0 0,1 15.5,12A3.5,3.5 0 0,1 12,15.5M19.43,12.97C19.47,12.65 19.5,12.33 19.5,12C19.5,11.67 19.47,11.34 19.43,11L21.54,9.37C21.73,9.22 21.78,8.95 21.66,8.73L19.66,5.27C19.54,5.05 19.27,4.96 19.05,5.05L16.56,6.05C16.04,5.66 15.5,5.32 14.87,5.07L14.5,2.42C14.46,2.18 14.25,2 14,2H10C9.75,2 9.54,2.18 9.5,2.42L9.13,5.07C8.5,5.32 7.96,5.66 7.44,6.05L4.95,5.05C4.73,4.96 4.46,5.05 4.34,5.27L2.34,8.73C2.21,8.95 2.27,9.22 2.46,9.37L4.57,11C4.53,11.34 4.5,11.67 4.5,12C4.5,12.33 4.53,12.65 4.57,12.97L2.46,14.63C2.27,14.78 2.21,15.05 2.34,15.27L4.34,18.73C4.46,18.95 4.73,19.03 4.95,18.95L7.44,17.94C7.96,18.34 8.5,18.68 9.13,18.93L9.5,21.58C9.54,21.82 9.75,22 10,22H14C14.25,22 14.46,21.82 14.5,21.58L14.87,18.93C15.5,18.67 16.04,18.34 16.56,17.94L19.05,18.95C19.27,19.03 19.54,18.95 19.66,18.73L21.66,15.27C21.78,15.05 21.73,14.78 21.54,14.63L19.43,12.97Z"/></svg>
<span class="t" style="left:583.5px;top:196px;font-size:8.87px;color:#4b5563">test</span>
<span class="t" style="left:564.8px;top:229px;font-size:9.82px;color:#6366f1;border-bottom:1px dotted #a5b4fc;height:17px">Smoke Run</span>
<span class="t" style="left:564.8px;top:257px;font-size:9.79px;color:#111827;-webkit-text-stroke:.15px #111827">Jun 17, 2025 12:46 PM → Jun 17, 2025 12:47 PM</span>
<span class="t" style="left:564.8px;top:311px;font-size:9.80px;color:#111827;-webkit-text-stroke:.15px #111827">Jun 17, 2025 12:45 PM</span>
<svg style="left:563.9px;top:287.9px" width="246" height="11" viewBox="0 0 246 11"><rect x="0.0" y="0" width="6.1" height="6.1" fill="#9a9ef2" fill-opacity="0.68"/><rect x="0.0" y="6" width="6.1" height="5" fill="#9a9ef2" fill-opacity="0.26"/><rect x="6.0" y="0" width="6.1" height="6.1" fill="#9a9ef2" fill-opacity="0.64"/><rect x="6.0" y="6" width="6.1" height="5" fill="#9a9ef2" fill-opacity="0.30"/><rect x="12.0" y="0" width="6.1" height="6.1" fill="#9a9ef2" fill-opacity="0.51"/><rect x="12.0" y="6" width="6.1" height="5" fill="#9a9ef2" fill-opacity="0.38"/><rect x="18.0" y="0" width="6.1" height="6.1" fill="#9a9ef2" fill-opacity="0.47"/><rect x="18.0" y="6" width="6.1" height="5" fill="#9a9ef2" fill-opacity="0.26"/><rect x="24.0" y="0" width="6.1" height="6.1" fill="#9a9ef2" fill-opacity="0.17"/><rect x="24.0" y="6" width="6.1" height="5" fill="#9a9ef2" fill-opacity="0.26"/><rect x="30.0" y="0" width="6.1" height="6.1" fill="#9a9ef2" fill-opacity="0.26"/><rect x="30.0" y="6" width="6.1" height="5" fill="#9a9ef2" fill-opacity="0.21"/><rect x="36.0" y="0" width="6.1" height="6.1" fill="#9a9ef2" fill-opacity="0.38"/><rect x="36.0" y="6" width="6.1" height="5" fill="#9a9ef2" fill-opacity="0.38"/><rect x="42.0" y="0" width="6.1" height="6.1" fill="#9a9ef2" fill-opacity="0.68"/><rect x="42.0" y="6" width="6.1" height="5" fill="#9a9ef2" fill-opacity="0.34"/><rect x="48.0" y="0" width="6.1" height="6.1" fill="#9a9ef2" fill-opacity="0.26"/><rect x="48.0" y="6" width="6.1" height="5" fill="#9a9ef2" fill-opacity="0.26"/><rect x="54.0" y="0" width="6.1" height="6.1" fill="#9a9ef2" fill-opacity="0.68"/><rect x="54.0" y="6" width="6.1" height="5" fill="#9a9ef2" fill-opacity="0.26"/><rect x="60.0" y="6" width="6.1" height="5" fill="#9a9ef2" fill-opacity="0.21"/><rect x="66.0" y="0" width="6.1" height="6.1" fill="#9a9ef2" fill-opacity="0.21"/><rect x="66.0" y="6" width="6.1" height="5" fill="#9a9ef2" fill-opacity="0.26"/><rect x="72.0" y="0" width="6.1" height="6.1" fill="#9a9ef2" fill-opacity="0.26"/><rect x="72.0" y="6" width="6.1" height="5" fill="#9a9ef2" fill-opacity="0.26"/><rect x="78.0" y="0" width="6.1" height="6.1" fill="#9a9ef2" fill-opacity="0.42"/><rect x="78.0" y="6" width="6.1" height="5" fill="#9a9ef2" fill-opacity="0.26"/><rect x="84.0" y="0" width="6.1" height="6.1" fill="#9a9ef2" fill-opacity="0.51"/><rect x="84.0" y="6" width="6.1" height="5" fill="#9a9ef2" fill-opacity="0.26"/><rect x="90.0" y="0" width="6.1" height="6.1" fill="#9a9ef2" fill-opacity="0.26"/><rect x="90.0" y="6" width="6.1" height="5" fill="#9a9ef2" fill-opacity="0.21"/><rect x="96.0" y="0" width="6.1" height="6.1" fill="#9a9ef2" fill-opacity="0.59"/><rect x="96.0" y="6" width="6.1" height="5" fill="#9a9ef2" fill-opacity="0.26"/><rect x="102.0" y="0" width="6.1" height="6.1" fill="#9a9ef2" fill-opacity="0.26"/><rect x="102.0" y="6" width="6.1" height="5" fill="#9a9ef2" fill-opacity="0.26"/><rect x="108.0" y="0" width="6.1" height="6.1" fill="#9a9ef2" fill-opacity="0.30"/><rect x="108.0" y="6" width="6.1" height="5" fill="#9a9ef2" fill-opacity="0.26"/><rect x="114.0" y="0" width="6.1" height="6.1" fill="#9a9ef2" fill-opacity="0.30"/><rect x="114.0" y="6" width="6.1" height="5" fill="#9a9ef2" fill-opacity="0.26"/><rect x="120.0" y="0" width="6.1" height="6.1" fill="#9a9ef2" fill-opacity="0.42"/><rect x="120.0" y="6" width="6.1" height="5" fill="#9a9ef2" fill-opacity="0.26"/><rect x="126.0" y="0" width="6.1" height="6.1" fill="#9a9ef2" fill-opacity="0.64"/><rect x="126.0" y="6" width="6.1" height="5" fill="#9a9ef2" fill-opacity="0.26"/><rect x="132.0" y="0" width="6.1" height="6.1" fill="#9a9ef2" fill-opacity="0.51"/><rect x="132.0" y="6" width="6.1" height="5" fill="#9a9ef2" fill-opacity="0.26"/><rect x="138.0" y="0" width="6.1" height="6.1" fill="#9a9ef2" fill-opacity="0.47"/><rect x="138.0" y="6" width="6.1" height="5" fill="#9a9ef2" fill-opacity="0.26"/><rect x="144.0" y="0" width="6.1" height="6.1" fill="#9a9ef2" fill-opacity="0.17"/><rect x="144.0" y="6" width="6.1" height="5" fill="#9a9ef2" fill-opacity="0.26"/><rect x="150.0" y="0" width="6.1" height="6.1" fill="#9a9ef2" fill-opacity="0.26"/><rect x="150.0" y="6" width="6.1" height="5" fill="#9a9ef2" fill-opacity="0.26"/><rect x="156.0" y="0" width="6.1" height="6.1" fill="#9a9ef2" fill-opacity="0.47"/><rect x="156.0" y="6" width="6.1" height="5" fill="#9a9ef2" fill-opacity="0.26"/><rect x="162.0" y="0" width="6.1" height="6.1" fill="#9a9ef2" fill-opacity="0.34"/><rect x="162.0" y="6" width="6.1" height="5" fill="#9a9ef2" fill-opacity="0.26"/><rect x="168.0" y="0" width="6.1" height="6.1" fill="#9a9ef2" fill-opacity="0.30"/><rect x="168.0" y="6" width="6.1" height="5" fill="#9a9ef2" fill-opacity="0.34"/><rect x="174.0" y="0" width="6.1" height="6.1" fill="#9a9ef2" fill-opacity="0.04"/><rect x="174.0" y="6" width="6.1" height="5" fill="#9a9ef2" fill-opacity="0.34"/><rect x="180.0" y="0" width="6.1" height="6.1" fill="#9a9ef2" fill-opacity="0.17"/><rect x="180.0" y="6" width="6.1" height="5" fill="#9a9ef2" fill-opacity="0.34"/><rect x="186.0" y="0" width="6.1" height="6.1" fill="#9a9ef2" fill-opacity="0.21"/><rect x="186.0" y="6" width="6.1" height="5" fill="#9a9ef2" fill-opacity="0.30"/><rect x="192.0" y="0" width="6.1" height="6.1" fill="#9a9ef2" fill-opacity="0.42"/><rect x="192.0" y="6" width="6.1" height="5" fill="#9a9ef2" fill-opacity="0.26"/><rect x="198.0" y="0" width="6.1" height="6.1" fill="#9a9ef2" fill-opacity="0.68"/><rect x="198.0" y="6" width="6.1" height="5" fill="#9a9ef2" fill-opacity="0.26"/><rect x="204.0" y="0" width="6.1" height="6.1" fill="#9a9ef2" fill-opacity="0.42"/><rect x="204.0" y="6" width="6.1" height="5" fill="#9a9ef2" fill-opacity="0.26"/><rect x="210.0" y="0" width="6.1" height="6.1" fill="#9a9ef2" fill-opacity="0.34"/><rect x="210.0" y="6" width="6.1" height="5" fill="#9a9ef2" fill-opacity="0.26"/><rect x="216.0" y="0" width="6.1" height="6.1" fill="#9a9ef2" fill-opacity="0.47"/><rect x="216.0" y="6" width="6.1" height="5" fill="#9a9ef2" fill-opacity="0.30"/><rect x="222.0" y="0" width="6.1" height="6.1" fill="#9a9ef2" fill-opacity="0.04"/><rect x="222.0" y="6" width="6.1" height="5" fill="#9a9ef2" fill-opacity="0.26"/><rect x="228.0" y="0" width="6.1" height="6.1" fill="#9a9ef2" fill-opacity="0.30"/><rect x="228.0" y="6" width="6.1" height="5" fill="#9a9ef2" fill-opacity="0.26"/><rect x="234.0" y="6" width="6.1" height="5" fill="#b9b9c4" fill-opacity="0.21"/><rect x="240.0" y="6" width="6.1" height="5" fill="#b9b9c4" fill-opacity="0.21"/></svg>
<span class="t" style="left:21.0px;top:348px;font-size:10.88px;font-weight:700;color:#5b5fef">Tests</span>
<span class="t" style="left:65.5px;top:348px;font-size:11.98px;letter-spacing:0.056px;color:#5f6368;-webkit-text-stroke:.2px #5f6368">Statistics</span>
<span class="t" style="left:131.1px;top:348px;font-size:11.87px;color:#5f6368;-webkit-text-stroke:.2px #5f6368">Defects</span>
<div class="abs" style="left:20.3px;top:372.2px;width:803.5px;height:1px;background:#eef0f2"></div>
<div class="abs" style="left:20.3px;top:370.6px;width:28.8px;height:2px;background:#6366f1"></div>
<div class="abs" style="left:20.2px;top:381.3px;width:69.0px;height:25.7px;background:#e5e7eb;border-radius:4px"></div>
<span class="t" style="left:31.9px;top:385px;font-size:10.98px;color:#374151">Passed</span>
<span class="t" style="left:72.1px;top:385px;font-size:10.53px;letter-spacing:-0.410px;color:#16a34a">7</span>
<div class="abs" style="left:95.2px;top:381.3px;width:62.5px;height:25.7px;background:#e5e7eb;border-radius:4px"></div>
<span class="t" style="left:106.9px;top:385px;font-size:10.73px;color:#374151">Failed</span>
<span class="t" style="left:140.3px;top:385px;font-size:10.53px;letter-spacing:-0.360px;color:#ef4444">2</span>
<div class="abs" style="left:163.0px;top:381.3px;width:74.5px;height:25.7px;background:#e5e7eb;border-radius:4px"></div>
<span class="t" style="left:174.8px;top:385px;font-size:11.55px;color:#374151">Skipped</span>
<span class="t" style="left:219.4px;top:385px;font-size:10.60px;color:#f59e0b">0</span>
<div class="abs" style="left:243.6px;top:381.3px;width:73.9px;height:25.7px;background:#e5e7eb;border-radius:4px"></div>
<span class="t" style="left:255.2px;top:385px;font-size:11.51px;color:#374151">Pending</span>
<span class="t" style="left:299.9px;top:385px;font-size:10.60px;color:#374151">0</span>
<div class="abs" style="left:323.2px;top:381.3px;width:45.9px;height:25.7px;background:#e5e7eb;border-radius:4px"></div>
<svg style="left:334.5px;top:387.2px" width="13.6" height="13.6" viewBox="0 0 24 24" fill="#374151"><path d="M13,10H11V6H13V10M13,14H11V12H13V14M20,2H4A2,2 0 0,0 2,4V22L6,18H20A2,2 0 0,0 22,16V4A2,2 0 0,0 20,2M20,16H5.17L4,17.17V4H20V16Z"/></svg>
<span class="t" style="left:351.1px;top:385px;font-size:10.53px;letter-spacing:-0.160px;color:#6366f1">2</span>
<div class="abs" style="left:377.0px;top:381.6px;width:151.8px;height:24.9px;background:#fff;border:1px solid #e5e7eb;border-radius:4px"></div>
<svg style="left:385.4px;top:387.5px" width="13.3" height="13.3" viewBox="0 0 24 24" fill="#9ca3af"><path d="M9.5,3A6.5,6.5 0 0,1 16,9.5C16,11.11 15.41,12.59 14.44,13.73L14.71,14H15.5L20.5,19L19,20.5L14,15.5V14.71L13.73,14.44C12.59,15.41 11.11,16 9.5,16A6.5,6.5 0 0,1 3,9.5A6.5,6.5 0 0,1 9.5,3M9.5,5C7,5 5,7 5,9.5C5,12 7,14 9.5,14C12,14 14,12 14,9.5C14,7 12,5 9.5,5Z"/></svg>
<div class="abs" style="left:404.8px;top:384px;width:106.6px;height:20px;overflow:hidden">
<span class="t" style="left:0.6px;top:2px;font-size:10.49px;letter-spacing:0.028px;color:#6b7280;-webkit-text-stroke:.15px #6b7280">Search by title/message</span>
</div>
<span class="t" style="left:20.5px;top:415px;font-size:11.54px;color:#111827">sort by:</span>
<span class="t" style="left:62.2px;top:415px;font-size:11.32px;color:#6366f1;border-bottom:1px dotted #a5b4fc;height:17.9px">suite</span>
<span class="t" style="left:90.0px;top:415px;font-size:11.98px;letter-spacing:0.173px;color:#111827">/</span>
<span class="t" style="left:96.7px;top:415px;font-size:11.64px;color:#6366f1;border-bottom:1px dotted #a5b4fc;height:17.9px">testcase</span>
<span class="t" style="left:143.6px;top:415px;font-size:11.98px;letter-spacing:0.173px;color:#111827">/</span>
<span class="t" style="left:150.5px;top:415px;font-size:11.65px;color:#6366f1;border-bottom:1px dotted #a5b4fc;height:17.9px">failure</span>
<svg style="left:20.0px;top:445.0px" width="10" height="10" viewBox="0 0 10 10"><circle cx="5" cy="5" r="4.4" fill="#1fb877"/><path d="M3 5.1L4.4 6.5L7.1 3.7" fill="none" stroke="#fff" stroke-width="1.3"/></svg>
<svg style="left:35.0px;top:443.2px" width="13.7" height="13.7" viewBox="0 0 24 24" fill="#6b7280"><path d="M19 3H14.82C14.4 1.84 13.3 1 12 1S9.6 1.84 9.18 3H5C3.9 3 3 3.9 3 5V19C3 20.1 3.9 21 5 21H19C20.1 21 21 20.1 21 19V5C21 3.9 20.1 3 19 3M12 3C12.55 3 13 3.45 13 4S12.55 5 12 5 11 4.55 11 4 11.45 3 12 3M7 7H17V5H19V19H5V5H7V7M7 9H9V11H7ZM11 9H17V11H11ZM7 13H9V15H7ZM11 13H17V15H11Z"/></svg>
<span class="t" style="left:54.3px;top:441px;font-size:8.90px;letter-spacing:0.564px;color:#6b7280;font-family:'DejaVu Sans Mono',monospace;-webkit-text-stroke:.2px #6b7280">@first Create Todos…</span>
<div class="abs" style="left:186.1px;top:443.4px;width:13.3px;height:13.3px;background:#faf7ff;border-radius:3px"></div>
<svg style="left:187.1px;top:444.3px" width="11.4" height="11.4" viewBox="-6 -6 12 12" fill="none"><path d="M2.6 3.5A4.3 4.3 0 1 1 4.2 1" stroke="#7c3aed" stroke-width="1.15"/><path d="M.6 2.2A2.3 2.3 0 1 1 2.2 .5" stroke="#7c3aed" stroke-width="1.05"/><path d="M.2 .1L4.1 1.5L2.9 2.3L4.9 4.4L4.3 5L2.2 2.9L1.5 4.1Z" fill="#5b21d6"/></svg>
<span class="t" style="left:202.8px;top:441px;font-size:11.53px;color:#0b0f19">Create a new todo item</span>
<svg style="left:20.0px;top:466.9px" width="10" height="10" viewBox="0 0 10 10"><circle cx="5" cy="5" r="4.4" fill="#1fb877"/><path d="M3 5.1L4.4 6.5L7.1 3.7" fill="none" stroke="#fff" stroke-width="1.3"/></svg>
<svg style="left:35.0px;top:465.1px" width="13.7" height="13.7" viewBox="0 0 24 24" fill="#6b7280"><path d="M19 3H14.82C14.4 1.84 13.3 1 12 1S9.6 1.84 9.18 3H5C3.9 3 3 3.9 3 5V19C3 20.1 3.9 21 5 21H19C20.1 21 21 20.1 21 19V5C21 3.9 20.1 3 19 3M12 3C12.55 3 13 3.45 13 4S12.55 5 12 5 11 4.55 11 4 11.45 3 12 3M7 7H17V5H19V19H5V5H7V7M7 9H9V11H7ZM11 9H17V11H11ZM7 13H9V15H7ZM11 13H17V15H11Z"/></svg>
<span class="t" style="left:54.3px;top:463px;font-size:8.90px;letter-spacing:0.564px;color:#6b7280;font-family:'DejaVu Sans Mono',monospace;-webkit-text-stroke:.2px #6b7280">@first Create Todos…</span>
<div class="abs" style="left:186.1px;top:465.3px;width:13.3px;height:13.3px;background:#faf7ff;border-radius:3px"></div>
<svg style="left:187.1px;top:466.2px" width="11.4" height="11.4" viewBox="-6 -6 12 12" fill="none"><path d="M2.6 3.5A4.3 4.3 0 1 1 4.2 1" stroke="#7c3aed" stroke-width="1.15"/><path d="M.6 2.2A2.3 2.3 0 1 1 2.2 .5" stroke="#7c3aed" stroke-width="1.05"/><path d="M.2 .1L4.1 1.5L2.9 2.3L4.9 4.4L4.3 5L2.2 2.9L1.5 4.1Z" fill="#5b21d6"/></svg>
<span class="t" style="left:202.8px;top:463px;font-size:11.61px;color:#0b0f19">Create multiple todo items</span>
<svg style="left:20.0px;top:488.9px" width="10" height="10" viewBox="0 0 10 10"><circle cx="5" cy="5" r="4.4" fill="#1fb877"/><path d="M3 5.1L4.4 6.5L7.1 3.7" fill="none" stroke="#fff" stroke-width="1.3"/></svg>
<svg style="left:35.0px;top:487.0px" width="13.7" height="13.7" viewBox="0 0 24 24" fill="#6b7280"><path d="M19 3H14.82C14.4 1.84 13.3 1 12 1S9.6 1.84 9.18 3H5C3.9 3 3 3.9 3 5V19C3 20.1 3.9 21 5 21H19C20.1 21 21 20.1 21 19V5C21 3.9 20.1 3 19 3M12 3C12.55 3 13 3.45 13 4S12.55 5 12 5 11 4.55 11 4 11.45 3 12 3M7 7H17V5H19V19H5V5H7V7M7 9H9V11H7ZM11 9H17V11H11ZM7 13H9V15H7ZM11 13H17V15H11Z"/></svg>
<span class="t" style="left:54.3px;top:485px;font-size:8.90px;letter-spacing:0.564px;color:#6b7280;font-family:'DejaVu Sans Mono',monospace;-webkit-text-stroke:.2px #6b7280">@first Create Todos…</span>
<div class="abs" style="left:186.1px;top:487.3px;width:13.3px;height:13.3px;background:#faf7ff;border-radius:3px"></div>
<svg style="left:187.1px;top:488.2px" width="11.4" height="11.4" viewBox="-6 -6 12 12" fill="none"><path d="M2.6 3.5A4.3 4.3 0 1 1 4.2 1" stroke="#7c3aed" stroke-width="1.15"/><path d="M.6 2.2A2.3 2.3 0 1 1 2.2 .5" stroke="#7c3aed" stroke-width="1.05"/><path d="M.2 .1L4.1 1.5L2.9 2.3L4.9 4.4L4.3 5L2.2 2.9L1.5 4.1Z" fill="#5b21d6"/></svg>
<span class="t" style="left:202.8px;top:485px;font-size:11.71px;color:#0b0f19">Todos containing weird characters</span>
<svg style="left:20.0px;top:510.8px" width="10" height="10" viewBox="0 0 10 10"><circle cx="5" cy="5" r="4.4" fill="#1fb877"/><path d="M3 5.1L4.4 6.5L7.1 3.7" fill="none" stroke="#fff" stroke-width="1.3"/></svg>
<svg style="left:35.0px;top:508.9px" width="13.7" height="13.7" viewBox="0 0 24 24" fill="#6b7280"><path d="M19 3H14.82C14.4 1.84 13.3 1 12 1S9.6 1.84 9.18 3H5C3.9 3 3 3.9 3 5V19C3 20.1 3.9 21 5 21H19C20.1 21 21 20.1 21 19V5C21 3.9 20.1 3 19 3M12 3C12.55 3 13 3.45 13 4S12.55 5 12 5 11 4.55 11 4 11.45 3 12 3M7 7H17V5H19V19H5V5H7V7M7 9H9V11H7ZM11 9H17V11H11ZM7 13H9V15H7ZM11 13H17V15H11Z"/></svg>
<span class="t" style="left:54.3px;top:507px;font-size:8.90px;letter-spacing:0.564px;color:#6b7280;font-family:'DejaVu Sans Mono',monospace;-webkit-text-stroke:.2px #6b7280">@first Create Todos…</span>
<div class="abs" style="left:186.1px;top:509.2px;width:13.3px;height:13.3px;background:#faf7ff;border-radius:3px"></div>
<svg style="left:187.1px;top:510.1px" width="11.4" height="11.4" viewBox="-6 -6 12 12" fill="none"><path d="M2.6 3.5A4.3 4.3 0 1 1 4.2 1" stroke="#7c3aed" stroke-width="1.15"/><path d="M.6 2.2A2.3 2.3 0 1 1 2.2 .5" stroke="#7c3aed" stroke-width="1.05"/><path d="M.2 .1L4.1 1.5L2.9 2.3L4.9 4.4L4.3 5L2.2 2.9L1.5 4.1Z" fill="#5b21d6"/></svg>
<span class="t" style="left:202.8px;top:507px;font-size:11.71px;color:#0b0f19">Todos containing weird characters</span>
<svg style="left:20.0px;top:532.7px" width="10" height="10" viewBox="0 0 10 10"><circle cx="5" cy="5" r="4.4" fill="#1fb877"/><path d="M3 5.1L4.4 6.5L7.1 3.7" fill="none" stroke="#fff" stroke-width="1.3"/></svg>
<svg style="left:35.0px;top:530.9px" width="13.7" height="13.7" viewBox="0 0 24 24" fill="#6b7280"><path d="M19 3H14.82C14.4 1.84 13.3 1 12 1S9.6 1.84 9.18 3H5C3.9 3 3 3.9 3 5V19C3 20.1 3.9 21 5 21H19C20.1 21 21 20.1 21 19V5C21 3.9 20.1 3 19 3M12 3C12.55 3 13 3.45 13 4S12.55 5 12 5 11 4.55 11 4 11.45 3 12 3M7 7H17V5H19V19H5V5H7V7M7 9H9V11H7ZM11 9H17V11H11ZM7 13H9V15H7ZM11 13H17V15H11Z"/></svg>
<span class="t" style="left:54.3px;top:529px;font-size:8.90px;letter-spacing:0.564px;color:#6b7280;font-family:'DejaVu Sans Mono',monospace;-webkit-text-stroke:.2px #6b7280">@first Create Todos…</span>
<div class="abs" style="left:186.1px;top:531.1px;width:13.3px;height:13.3px;background:#faf7ff;border-radius:3px"></div>
<svg style="left:187.1px;top:532.0px" width="11.4" height="11.4" viewBox="-6 -6 12 12" fill="none"><path d="M2.6 3.5A4.3 4.3 0 1 1 4.2 1" stroke="#7c3aed" stroke-width="1.15"/><path d="M.6 2.2A2.3 2.3 0 1 1 2.2 .5" stroke="#7c3aed" stroke-width="1.05"/><path d="M.2 .1L4.1 1.5L2.9 2.3L4.9 4.4L4.3 5L2.2 2.9L1.5 4.1Z" fill="#5b21d6"/></svg>
<span class="t" style="left:202.8px;top:529px;font-size:11.71px;color:#0b0f19">Todos containing weird characters</span>
<svg style="left:20.0px;top:554.6px" width="10" height="10" viewBox="0 0 10 10"><circle cx="5" cy="5" r="4.4" fill="#1fb877"/><path d="M3 5.1L4.4 6.5L7.1 3.7" fill="none" stroke="#fff" stroke-width="1.3"/></svg>
<svg style="left:35.0px;top:552.8px" width="13.7" height="13.7" viewBox="0 0 24 24" fill="#6b7280"><path d="M19 3H14.82C14.4 1.84 13.3 1 12 1S9.6 1.84 9.18 3H5C3.9 3 3 3.9 3 5V19C3 20.1 3.9 21 5 21H19C20.1 21 21 20.1 21 19V5C21 3.9 20.1 3 19 3M12 3C12.55 3 13 3.45 13 4S12.55 5 12 5 11 4.55 11 4 11.45 3 12 3M7 7H17V5H19V19H5V5H7V7M7 9H9V11H7ZM11 9H17V11H11ZM7 13H9V15H7ZM11 13H17V15H11Z"/></svg>
<span class="t" style="left:54.3px;top:550px;font-size:8.90px;letter-spacing:0.564px;color:#6b7280;font-family:'DejaVu Sans Mono',monospace;-webkit-text-stroke:.2px #6b7280">@first Create Todos…</span>
<div class="abs" style="left:186.1px;top:553.0px;width:13.3px;height:13.3px;background:#faf7ff;border-radius:3px"></div>
<svg style="left:187.1px;top:553.9px" width="11.4" height="11.4" viewBox="-6 -6 12 12" fill="none"><path d="M2.6 3.5A4.3 4.3 0 1 1 4.2 1" stroke="#7c3aed" stroke-width="1.15"/><path d="M.6 2.2A2.3 2.3 0 1 1 2.2 .5" stroke="#7c3aed" stroke-width="1.05"/><path d="M.2 .1L4.1 1.5L2.9 2.3L4.9 4.4L4.3 5L2.2 2.9L1.5 4.1Z" fill="#5b21d6"/></svg>
<span class="t" style="left:202.8px;top:551px;font-size:11.71px;color:#0b0f19">Text input field should be cleared after each item</span>
<svg style="left:20.0px;top:576.6px" width="10" height="10" viewBox="0 0 10 10"><circle cx="5" cy="5" r="4.4" fill="#ef3b3b"/><rect x="2.7" y="4.3" width="4.6" height="1.4" rx=".3" fill="#fff"/></svg>
<svg style="left:35.0px;top:574.7px" width="13.7" height="13.7" viewBox="0 0 24 24" fill="#6b7280"><path d="M19 3H14.82C14.4 1.84 13.3 1 12 1S9.6 1.84 9.18 3H5C3.9 3 3 3.9 3 5V19C3 20.1 3.9 21 5 21H19C20.1 21 21 20.1 21 19V5C21 3.9 20.1 3 19 3M12 3C12.55 3 13 3.45 13 4S12.55 5 12 5 11 4.55 11 4 11.45 3 12 3M7 7H17V5H19V19H5V5H7V7M7 9H9V11H7ZM11 9H17V11H11ZM7 13H9V15H7ZM11 13H17V15H11Z"/></svg>
<span class="t" style="left:54.3px;top:572px;font-size:8.90px;letter-spacing:0.564px;color:#6b7280;font-family:'DejaVu Sans Mono',monospace;-webkit-text-stroke:.2px #6b7280">@first Create Todos…</span>
<div class="abs" style="left:186.1px;top:575.0px;width:13.3px;height:13.3px;background:#faf7ff;border-radius:3px"></div>
<svg style="left:187.1px;top:575.9px" width="11.4" height="11.4" viewBox="-6 -6 12 12" fill="none"><path d="M2.6 3.5A4.3 4.3 0 1 1 4.2 1" stroke="#7c3aed" stroke-width="1.15"/><path d="M.6 2.2A2.3 2.3 0 1 1 2.2 .5" stroke="#7c3aed" stroke-width="1.05"/><path d="M.2 .1L4.1 1.5L2.9 2.3L4.9 4.4L4.3 5L2.2 2.9L1.5 4.1Z" fill="#5b21d6"/></svg>
<span class="t" style="left:202.8px;top:573px;font-size:11.71px;color:#0b0f19">Text input should be trimmed</span>
<svg style="left:20.0px;top:598.5px" width="10" height="10" viewBox="0 0 10 10"><circle cx="5" cy="5" r="4.4" fill="#ef3b3b"/><rect x="2.7" y="4.3" width="4.6" height="1.4" rx=".3" fill="#fff"/></svg>
<svg style="left:35.0px;top:596.7px" width="13.7" height="13.7" viewBox="0 0 24 24" fill="#6b7280"><path d="M19 3H14.82C14.4 1.84 13.3 1 12 1S9.6 1.84 9.18 3H5C3.9 3 3 3.9 3 5V19C3 20.1 3.9 21 5 21H19C20.1 21 21 20.1 21 19V5C21 3.9 20.1 3 19 3M12 3C12.55 3 13 3.45 13 4S12.55 5 12 5 11 4.55 11 4 11.45 3 12 3M7 7H17V5H19V19H5V5H7V7M7 9H9V11H7ZM11 9H17V11H11ZM7 13H9V15H7ZM11 13H17V15H11Z"/></svg>
<span class="t" style="left:54.3px;top:594px;font-size:8.90px;letter-spacing:0.564px;color:#6b7280;font-family:'DejaVu Sans Mono',monospace;-webkit-text-stroke:.2px #6b7280">@first Create Todos…</span>
<div class="abs" style="left:186.1px;top:596.9px;width:13.3px;height:13.3px;background:#faf7ff;border-radius:3px"></div>
<svg style="left:187.1px;top:597.8px" width="11.4" height="11.4" viewBox="-6 -6 12 12" fill="none"><path d="M2.6 3.5A4.3 4.3 0 1 1 4.2 1" stroke="#7c3aed" stroke-width="1.15"/><path d="M.6 2.2A2.3 2.3 0 1 1 2.2 .5" stroke="#7c3aed" stroke-width="1.05"/><path d="M.2 .1L4.1 1.5L2.9 2.3L4.9 4.4L4.3 5L2.2 2.9L1.5 4.1Z" fill="#5b21d6"/></svg>
<span class="t" style="left:202.8px;top:595px;font-size:11.72px;color:#0b0f19">New todos should be added to the bottom of the list</span>
<svg style="left:20.0px;top:620.4px" width="10" height="10" viewBox="0 0 10 10"><circle cx="5" cy="5" r="4.4" fill="#1fb877"/><path d="M3 5.1L4.4 6.5L7.1 3.7" fill="none" stroke="#fff" stroke-width="1.3"/></svg>
<svg style="left:35.0px;top:618.6px" width="13.7" height="13.7" viewBox="0 0 24 24" fill="#6b7280"><path d="M19 3H14.82C14.4 1.84 13.3 1 12 1S9.6 1.84 9.18 3H5C3.9 3 3 3.9 3 5V19C3 20.1 3.9 21 5 21H19C20.1 21 21 20.1 21 19V5C21 3.9 20.1 3 19 3M12 3C12.55 3 13 3.45 13 4S12.55 5 12 5 11 4.55 11 4 11.45 3 12 3M7 7H17V5H19V19H5V5H7V7M7 9H9V11H7ZM11 9H17V11H11ZM7 13H9V15H7ZM11 13H17V15H11Z"/></svg>
<span class="t" style="left:54.3px;top:616px;font-size:8.90px;letter-spacing:0.564px;color:#6b7280;font-family:'DejaVu Sans Mono',monospace;-webkit-text-stroke:.2px #6b7280">@first Create Todos…</span>
<div class="abs" style="left:186.1px;top:618.8px;width:13.3px;height:13.3px;background:#faf7ff;border-radius:3px"></div>
<svg style="left:187.1px;top:619.7px" width="11.4" height="11.4" viewBox="-6 -6 12 12" fill="none"><path d="M2.6 3.5A4.3 4.3 0 1 1 4.2 1" stroke="#7c3aed" stroke-width="1.15"/><path d="M.6 2.2A2.3 2.3 0 1 1 2.2 .5" stroke="#7c3aed" stroke-width="1.05"/><path d="M.2 .1L4.1 1.5L2.9 2.3L4.9 4.4L4.3 5L2.2 2.9L1.5 4.1Z" fill="#5b21d6"/></svg>
<span class="t" style="left:202.8px;top:617px;font-size:11.51px;color:#0b0f19">Footer should be visible when adding TODOs</span>
</main>
<div class="abs" style="left:411.3px;top:10.1px;width:24.7px;height:24.3px;background:#e0e7ff;border-radius:4px 0 0 4px;box-shadow:0 1px 4px rgba(0,0,0,.18)"></div>
<svg style="left:416.4px;top:15.6px" width="14.1" height="14.1" viewBox="0 0 24 24" fill="#374151"><path d="M19,6.41L17.59,5L12,10.59L6.41,5L5,6.41L10.59,12L5,17.59L6.41,19L12,13.41L17.59,19L19,17.59L13.41,12L19,6.41Z"/></svg>
</div>
</body>
</html>
